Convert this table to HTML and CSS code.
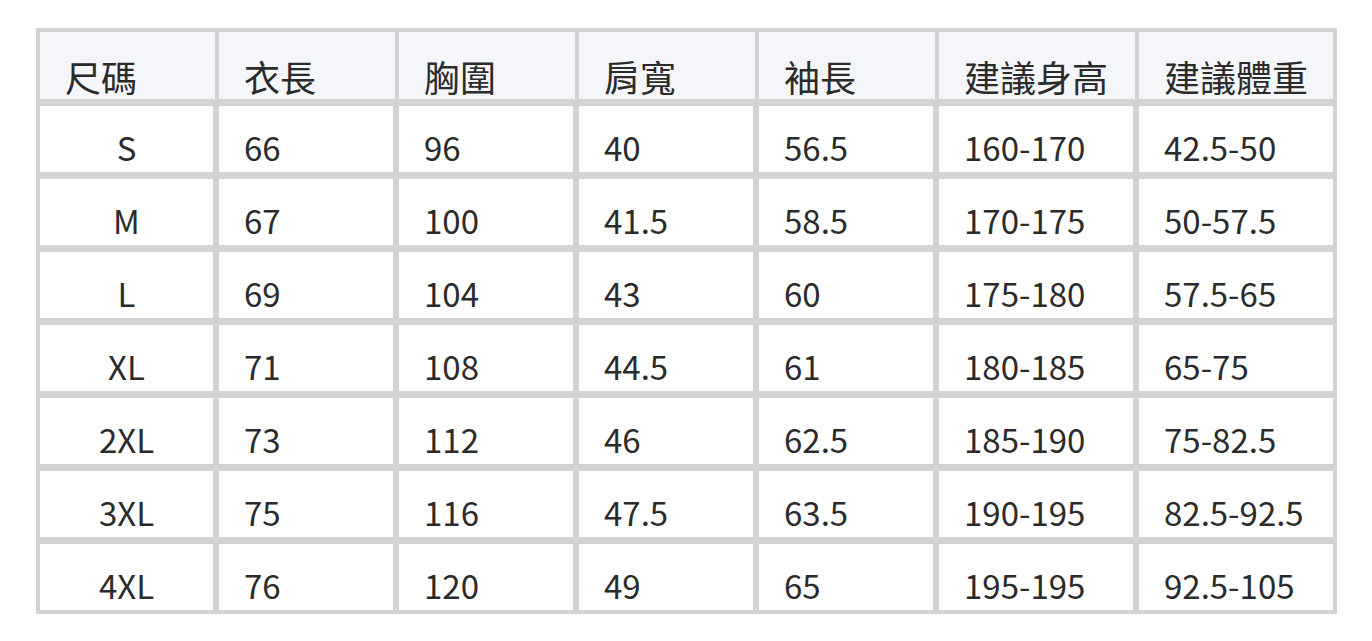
FILE: index.html
```html
<!DOCTYPE html>
<html lang="zh-Hant">
<head>
<meta charset="utf-8">
<title>尺碼表</title>
<link rel="stylesheet" href="styles.css">
</head>
<body>
<div class="size-table">
  <div class="cell head">尺碼</div>
  <div class="cell head">衣長</div>
  <div class="cell head">胸圍</div>
  <div class="cell head">肩寬</div>
  <div class="cell head">袖長</div>
  <div class="cell head">建議身高</div>
  <div class="cell head">建議體重</div>

  <div class="cell size">S</div><div class="cell">66</div><div class="cell">96</div><div class="cell">40</div><div class="cell">56.5</div><div class="cell">160-170</div><div class="cell last">42.5-50</div>
  <div class="cell size">M</div><div class="cell">67</div><div class="cell">100</div><div class="cell">41.5</div><div class="cell">58.5</div><div class="cell">170-175</div><div class="cell last">50-57.5</div>
  <div class="cell size">L</div><div class="cell">69</div><div class="cell">104</div><div class="cell">43</div><div class="cell">60</div><div class="cell">175-180</div><div class="cell last">57.5-65</div>
  <div class="cell size">XL</div><div class="cell">71</div><div class="cell">108</div><div class="cell">44.5</div><div class="cell">61</div><div class="cell">180-185</div><div class="cell last">65-75</div>
  <div class="cell size">2XL</div><div class="cell">73</div><div class="cell">112</div><div class="cell">46</div><div class="cell">62.5</div><div class="cell">185-190</div><div class="cell last">75-82.5</div>
  <div class="cell size">3XL</div><div class="cell">75</div><div class="cell">116</div><div class="cell">47.5</div><div class="cell">63.5</div><div class="cell">190-195</div><div class="cell last">82.5-92.5</div>
  <div class="cell size">4XL</div><div class="cell">76</div><div class="cell">120</div><div class="cell">49</div><div class="cell">65</div><div class="cell">195-195</div><div class="cell last">92.5-105</div>
</div>
</body>
</html>
```

FILE: styles.css
```css
html, body {
  margin: 0;
  padding: 0;
  background: #ffffff;
}

body {
  font-family: "Noto Sans CJK TC", "Noto Sans", sans-serif;
  color: #2b2b2b;
}

.size-table {
  box-sizing: border-box;
  margin: 28px 0 0 36px;
  width: 1301px;
  padding: 4px;
  background: #d3d3d3;
  display: grid;
  grid-template-columns: 175px 176px 176px 176px 176px 196px 194px;
  grid-template-rows: 67px repeat(7, 66px);
  column-gap: 4px;
  row-gap: 7px;
}

.cell {
  box-sizing: border-box;
  background: #ffffff;
  border-right: 2px solid #d3d3d3;
  padding-left: 25px;
  display: flex;
  align-items: center;
  font-size: 33px;
  line-height: 1;
  padding-top: 16px;
}

.cell.last {
  border-right: none;
}

.cell.head {
  background: #f5f6fa;
  border-right: none;
  font-size: 36px;
  padding-top: 20px;
}

.cell.size {
  justify-content: center;
  padding-left: 0;
}
```
